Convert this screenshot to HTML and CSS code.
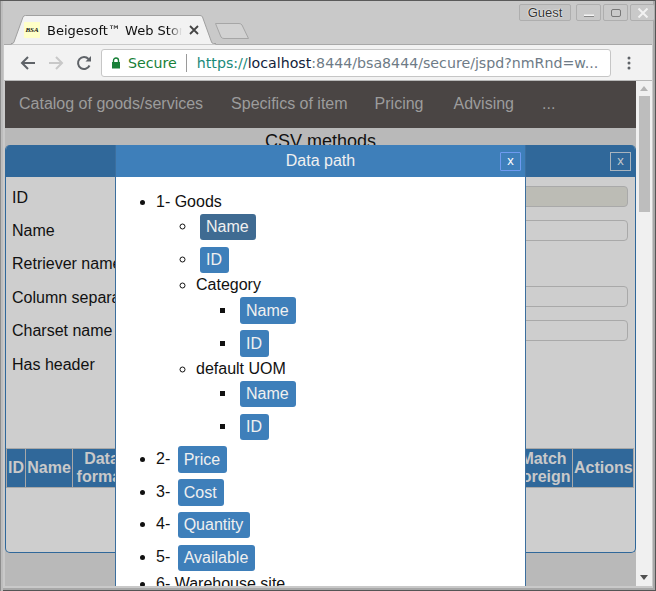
FILE: index.html
```html
<!DOCTYPE html>
<html lang="en">
<head>
<meta charset="utf-8">
<title>Beigesoft Web Store</title>
<link rel="stylesheet" href="styles.css">
</head>
<body>
<div class="window">
  <div class="titlebar">
    <div class="tab">
      <svg class="tab-shape" width="205" height="30" viewBox="0 0 205 30"><path d="M0 28.500H1Q2.500 28.500 3 27L12 2Q12.500 .5 14.500 .5H189Q191 .5 191.500 2L200.500 27Q201 28.500 202.500 28.500H205V30H0Z" fill="#f2f2f2" stroke="#a0a0a0"/></svg>
      <span class="favicon">BSA</span>
      <span class="tab-title">Beigesoft™ Web Store</span>
      <svg class="tab-close" width="10" height="10" viewBox="0 0 10 10"><path d="M1 1L9 9M9 1L1 9" stroke="#444" stroke-width="1.8" fill="none"/></svg>
    </div>
    <svg class="newtab" width="36" height="18" viewBox="0 0 36 18"><path d="M1.500 1.500H25Q27 1.500 28 3L34.500 16.500H10Q8 16.500 7 15Z" fill="#d2d2d2" stroke="#a6a6a6"/></svg>
    <div class="winctl">
      <span class="guest">Guest</span>
      <span class="winbtn"><svg width="12" height="10" viewBox="0 0 12 10"><path d="M1 7.500H11" stroke="#f4f4f4" stroke-width="2"/><path d="M1 8.500H11" stroke="#888"/></svg></span>
      <span class="winbtn"><svg width="12" height="10" viewBox="0 0 12 10"><rect x="1.500" y="1.500" width="9" height="7" rx="1.500" fill="none" stroke="#777"/></svg></span>
      <span class="winbtn"><svg width="12" height="10" viewBox="0 0 12 10"><path d="M1.500 .5L10.500 9.500M10.500 .5L1.500 9.500" stroke="#f2f2f2" stroke-width="2"/></svg></span>
    </div>
  </div>
  <div class="toolbar">
    <svg class="tool" width="16" height="16" viewBox="0 0 16 16"><path d="M15 8H2M8 2L2 8L8 14" stroke="#5f6368" stroke-width="2" fill="none"/></svg>
    <svg class="tool" width="16" height="16" viewBox="0 0 16 16"><path d="M1 8H14M8 2L14 8L8 14" stroke="#c8c8c8" stroke-width="2" fill="none"/></svg>
    <svg class="tool" width="16" height="16" viewBox="0 0 16 16"><path d="M13.500 10.500A6 6 0 1 1 12.500 4" stroke="#5f6368" stroke-width="2" fill="none"/><path d="M9.500 6.500H15V1Z" fill="#5f6368"/></svg>
    <div class="omnibox">
      <svg width="10" height="12" viewBox="0 0 10 12"><path d="M2.500 5V3.500A2.500 2.500 0 0 1 7.500 3.500V5" stroke="#188038" stroke-width="1.400" fill="none"/><rect x="1" y="5" width="8" height="6.500" fill="#188038"/></svg>
      <span class="secure">Secure</span>
      <span class="omnisep"></span>
      <span class="url"><span class="scheme">https://</span><span class="host">localhost</span>:8444/bsa8444/secure/jspd?nmRnd=w...</span>
    </div>
    <svg class="menu-dots" width="4" height="14" viewBox="0 0 4 14"><circle cx="2" cy="2" r="1.500"/><circle cx="2" cy="7" r="1.500"/><circle cx="2" cy="12" r="1.500"/></svg>
  </div>
  <div class="viewport-row">
    <div class="viewport">
      <nav class="nav">
        <a>Catalog of goods/services</a>
        <a>Specifics of item</a>
        <a>Pricing</a>
        <a>Advising</a>
        <a>...</a>
      </nav>
      <div class="page-title">CSV methods</div>

      <section class="dialog back">
        <header class="dlg-head back-head"><span class="xbtn back-x">x</span></header>
        <div class="form">
          <div class="frow"><label>ID</label><span class="input disabled"></span></div>
          <div class="frow"><label>Name</label><span class="input"></span></div>
          <div class="frow"><label>Retriever name</label></div>
          <div class="frow"><label>Column separator</label><span class="input"></span></div>
          <div class="frow"><label>Charset name</label><span class="input"></span></div>
          <div class="frow"><label>Has header</label></div>
        </div>
        <table class="cols">
          <tr>
            <th class="c-id">ID</th><th class="c-name">Name</th><th class="c-fmt">Data format</th><th class="c-fill"></th><th class="c-match">Match foreign</th><th class="c-act">Actions</th>
          </tr>
        </table>
      </section>

      <section class="dialog front">
        <header class="dlg-head front-head">
          <span class="dlg-title">Data path</span>
          <span class="xbtn front-x">x</span>
        </header>
        <div class="tree">
          <ul class="l1">
            <li>1- Goods
              <ul class="l2">
                <li class="has-btn"><a class="btn hover">Name</a></li>
                <li class="has-btn tight"><a class="btn">ID</a></li>
                <li>Category
                  <ul class="l3">
                    <li class="has-btn"><a class="btn tall">Name</a></li>
                    <li class="has-btn mid"><a class="btn tall">ID</a></li>
                  </ul>
                </li>
                <li>default UOM
                  <ul class="l3">
                    <li class="has-btn"><a class="btn">Name</a></li>
                    <li class="has-btn mid"><a class="btn">ID</a></li>
                  </ul>
                </li>
              </ul>
            </li>
            <li class="has-btn">2- <a class="btn tall">Price</a></li>
            <li class="has-btn">3- <a class="btn tall">Cost</a></li>
            <li class="has-btn">4- <a class="btn">Quantity</a></li>
            <li class="has-btn mid">5- <a class="btn">Available</a></li>
            <li>6- Warehouse site</li>
          </ul>
        </div>
      </section>
    </div>
    <div class="scrollbar">
      <svg width="8" height="5" viewBox="0 0 8 5"><path d="M0 5L4 0L8 5Z" fill="#b4b4b4"/></svg>
      <div class="thumb"></div>
      <svg class="sb-down" width="8" height="5" viewBox="0 0 8 5"><path d="M0 0L4 5L8 0Z" fill="#505050"/></svg>
    </div>
  </div>
</div>
</body>
</html>
```
FILE: styles.css
```css
* { box-sizing: border-box; }
html, body { margin: 0; padding: 0; }
body { font-family: "Liberation Sans", Arial, sans-serif; background: #c9c9c9; }
.window {
  width: 656px; height: 591px; overflow: hidden; display: flex; flex-direction: column;
  background: #c9c9c9; border-top: 1px solid #5a5a5a;
  padding: 0 4px 5px 5px; box-shadow: inset 1px 0 0 #8c8c8c, inset 3px 0 0 #bdbdbd, inset -1px -1px 0 #555, inset -3px -3px 0 #a8a8a8;
}
.titlebar { height: 43px; position: relative; z-index: 1; flex: none; margin: 0 -1px; }
.tab {
  position: absolute; left: 7px; top: 14px; width: 205px; height: 30px;
  display: flex; align-items: center; padding: 0 0 0 13px; gap: 6px;
}
.tab-shape { position: absolute; left: 0; top: 0; }
.favicon {
  position: relative; width: 16px; height: 16px; flex: none; background: #ffffc8; font: italic bold 7px "Liberation Serif", serif;
  color: #111; line-height: 16px; text-align: center;
}
.tab-title {
  position: relative; margin-left: 1px; font: 13px "DejaVu Sans", sans-serif; color: #111; white-space: nowrap; overflow: hidden; width: 135px; flex: none;
  -webkit-mask-image: linear-gradient(to right, #000 90%, transparent); mask-image: linear-gradient(to right, #000 90%, transparent);
}
.tab-close { position: relative; flex: none; margin-left: 1px; }
.newtab { position: absolute; left: 210px; top: 21px; }
.winctl { position: absolute; left: 515px; top: 3px; display: flex; gap: 2px; }
.guest {
  width: 52px; height: 17px; margin-right: 3px; border: 1px solid #aeaeae; border-radius: 2px; background: #c4c4c4;
  font-size: 13px; line-height: 15px; text-align: center; color: #333; text-shadow: 0 0 2px #fff, 0 0 1px #fff;
}
.winbtn { width: 25px; height: 17px; border: 1px solid #aeaeae; border-radius: 2px; display: flex; align-items: center; justify-content: center; background: #c9c9c9; }
.toolbar {
  height: 37px; flex: none; background: #f2f2f2; display: flex; align-items: center; padding: 0 0 0 16px; margin-left: -1px;
  border-bottom: 1px solid #b8b8b8; border-top: 1px solid #a8a8a8;
}
.tool { margin-right: 12px; flex: none; }
.omnibox {
  width: 510px; height: 28px; margin-left: -3px; background: #fff; border: 1px solid #c6c6c6; border-radius: 3px;
  display: flex; align-items: center; padding-left: 9px; font: 14.200px "DejaVu Sans", sans-serif; white-space: nowrap; overflow: hidden; flex: none;
}
.secure { color: #188038; margin-left: 7px; }
.omnisep { width: 1px; height: 18px; background: #9a9a9a; margin: 0 9px 0 9px; }
.url { color: #6e7b86; margin-left: 1px; }
.scheme { color: #1a8a7a; }
.host { color: #12233a; }
.menu-dots { margin-left: 16px; fill: #5f6368; flex: none; }
.viewport-row { flex: 1; display: flex; min-height: 0; }
.viewport { position: relative; width: 631px; overflow: hidden; background: #b9b9b9; flex: none; }
.scrollbar { flex: 1; background: #f0f0f0; display: flex; flex-direction: column; align-items: center; padding-top: 5px; }
.thumb { width: 11px; height: 116px; margin-top: 5px; background: #bdbdbd; }
.sb-down { margin-top: auto; margin-bottom: 6px; }
.nav { height: 47px; background: #4a4544; display: flex; align-items: center; padding: 0 0 2px 14px; gap: 28px; font-size: 16px; color: #9c9c9c; }
.nav a:nth-child(3) { margin-left: -1px; }
.nav a:nth-child(4) { margin-left: 2px; }
.page-title { height: 29px; text-align: center; font-size: 18px; color: #111; line-height: 26px; }
.dialog { position: absolute; top: 64px; }
.back { left: 0; width: 631px; height: 408px; background: #cecece; border: 1px solid #30689a; border-top: 0; border-radius: 5px; overflow: hidden; }
.front { left: 110px; width: 411px; height: 442px; background: #fff; border: 1px solid #3c6f9e; border-width: 0 1px; overflow: hidden; }
.dlg-head { height: 32px; display: flex; align-items: center; justify-content: center; position: relative; flex: none; }
.back-head { background: #30689a; margin: 0 -1px; }
.front-head { background: #3e7fba; margin: 0 -1px; color: #f0f0f0; font-size: 16px; }
.xbtn { position: absolute; top: 7px; width: 21px; height: 19px; border: 1px solid #a9b4be; font-size: 13px; text-align: center; line-height: 16px; }
.back-x { right: 5px; color: #c4c8cc; }
.front-x { right: 5px; border-color: #6f9bf0; border-radius: 1px; color: #fff; }
.form { padding: 4px 7px 0 6px; }
.frow { height: 33.400px; display: flex; align-items: center; justify-content: space-between; font-size: 16px; color: #111; }
.frow label { white-space: nowrap; }
.input { width: 300px; height: 21px; margin-bottom: 2px; border: 1px solid #a9a9a9; border-radius: 4px; }
.input.disabled { background: #bcbcb5; }
.cols { position: absolute; left: 0; top: 303px; width: 628px; height: 40px; border-collapse: collapse; table-layout: fixed; }
.cols th { background: #30689a; color: #c9c9c9; border: 1px solid #a8a8a8; font-size: 16px; line-height: 18px; padding: 0 1px; overflow: hidden; white-space: nowrap; }
.cols th.c-fmt, .cols th.c-match { white-space: normal; }
.c-id { width: 19px; }
.c-name { width: 47px; }
.c-fmt { width: 58px; }
.c-match { width: 58px; }
.c-act { width: 61px; }
.tree { font-size: 16px; color: #111; line-height: 19px; padding: 15px 0 0 0; }
.tree ul { margin: 0; }
.l1 { padding-left: 40px; list-style: disc; }
.l2 { padding-left: 40px; list-style: circle; }
.l3 { padding-left: 40px; list-style: square; }
.has-btn { height: 33px; padding-top: 3px; }
.has-btn.tight { height: 31px; }
.has-btn.mid { height: 32px; }
.btn {
  display: inline-block; background: #3e7fba; color: #f0f0f0; border-radius: 3px; padding: 0 7px 0 6px; line-height: 26px; height: 26px;
  font-size: 16px; margin-left: 4px; vertical-align: middle;
}
.l1 > .has-btn > .btn { margin-left: 3px; }
.btn.tall { height: 27px; line-height: 27px; }
.btn.hover { background: #3f6b92; }
```
